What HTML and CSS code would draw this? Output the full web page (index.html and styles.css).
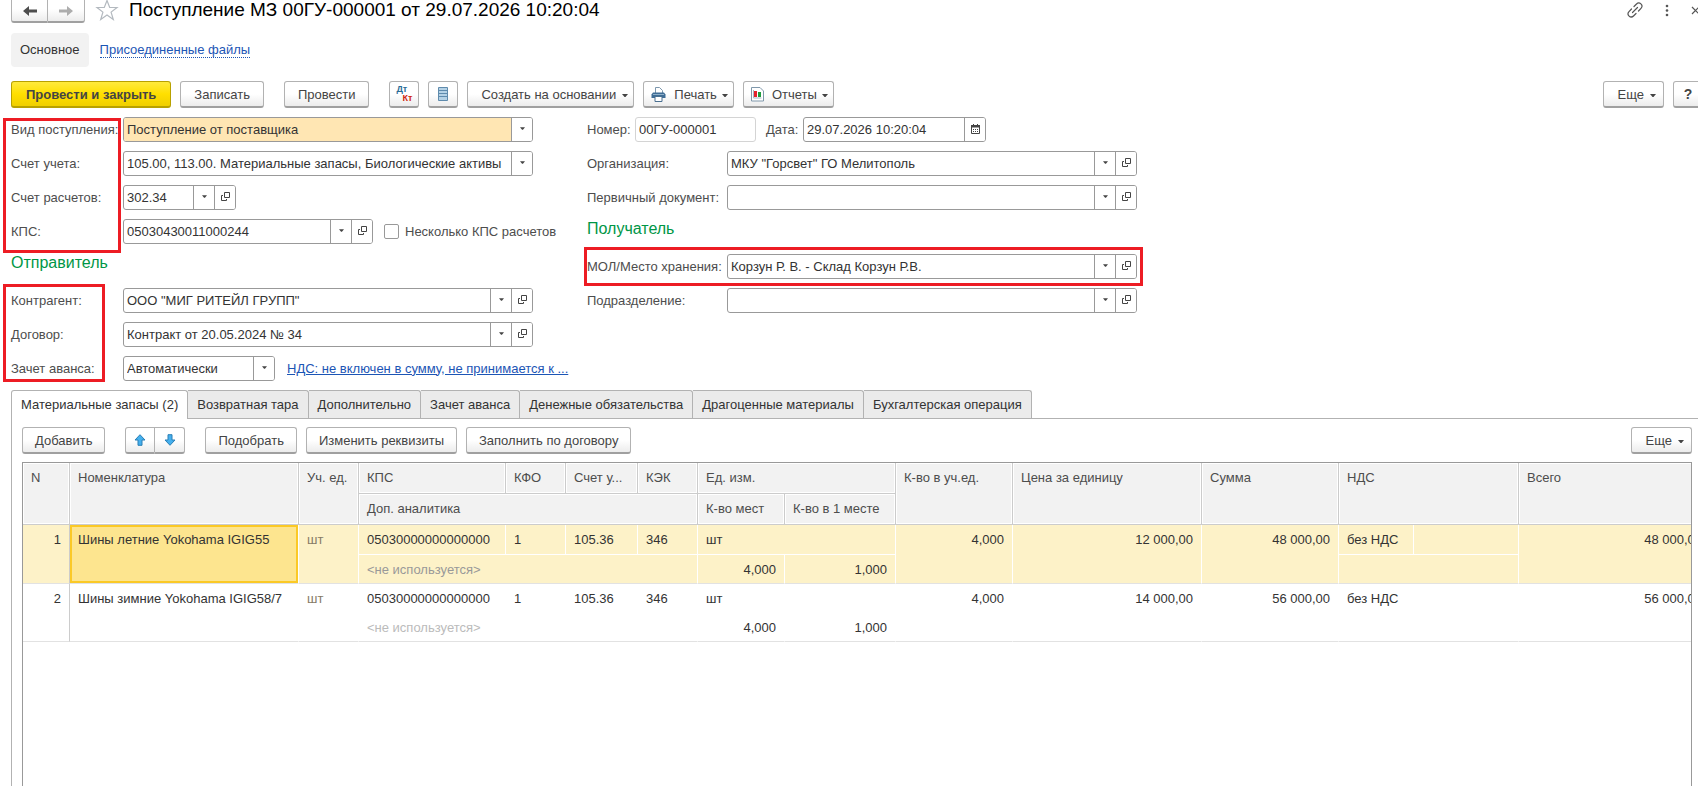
FILE: index.html
```html
<!DOCTYPE html>
<html lang="ru">

<head>
    <meta charset="UTF-8">
    <meta name="viewport" content="width=device-width, initial-scale=1.0">
    <title>Поступление МЗ</title>
    <link rel="stylesheet" href="styles.css">
</head>

<body>
    <!-- иконки -->
    <svg class="sprite" aria-hidden="true">
        <symbol id="i-caret" viewBox="0 0 6 3"><path d="M0 0h6L3.500 3h-1z" fill="#444"/></symbol>
        <symbol id="i-open" viewBox="0 0 9 9"><path d="M3.500.5h5v5h-5zM2 3.500H.5v5h5V7" fill="none" stroke="#444"/></symbol>
    </svg>

    <!-- заголовок -->
    <header class="header">
        <div class="btn-group nav">
            <button class="btn" aria-label="Назад"><svg width="14" height="10" viewBox="0 0 14 10"><path d="M0 5l6-5v3.500h8v3H6V10z" fill="#4d4d4d"/></svg></button>
            <button class="btn" aria-label="Вперед"><svg width="14" height="10" viewBox="0 0 14 10"><path d="M14 5L8 0v3.500H0v3h8V10z" fill="#adadad"/></svg></button>
        </div>
        <button class="icon-btn star" aria-label="В избранное"><svg width="24" height="22" viewBox="0 0 24 22"><path d="M12 1.500l2.700 7H22l-5.900 4.600 2.200 7.400-6.300-4.500-6.300 4.500 2.200-7.400L2 8.500h7.300z" fill="#fff" stroke="#b3b9bf" stroke-width="1.200"/></svg></button>
        <h1 class="title">Поступление МЗ 00ГУ-000001 от 29.07.2026 10:20:04</h1>
        <div class="window-tools">
            <button class="icon-btn" aria-label="Ссылка"><svg width="16" height="16" viewBox="0 0 16 16"><g fill="none" stroke="#555" stroke-width="1.200" stroke-linecap="round"><path d="M7 4.500l2.500-2.500a3 3 0 0 1 4.500 4.300L11.500 9"/><path d="M9 11.500L6.500 14A3 3 0 0 1 2 9.700L4.500 7"/><path d="M5.500 10.500l5-5"/></g></svg></button>
            <button class="icon-btn" aria-label="Меню"><svg width="4" height="14" viewBox="0 0 4 14"><g fill="#555"><circle cx="2" cy="3" r="1.300"/><circle cx="2" cy="7.500" r="1.300"/><circle cx="2" cy="12" r="1.300"/></g></svg></button>
            <button class="icon-btn" aria-label="Закрыть"><svg width="10" height="10" viewBox="0 0 10 10"><path d="M1 2l7 7M8 2L1 9" stroke="#555" stroke-width="1.200"/></svg></button>
        </div>
    </header>

    <nav class="sections">
        <a class="section active" href="#main">Основное</a>
        <a class="section" href="#files"><span>Присоединенные файлы</span></a>
    </nav>

    <!-- командная панель -->
    <div class="toolbar">
        <button class="btn primary">Провести и закрыть</button>
        <button class="btn">Записать</button>
        <button class="btn apart">Провести</button>
        <button class="btn square apart" aria-label="Дт Кт"><span class="dtkt"><span class="dt">Дт</span><span class="kt">Кт</span></span></button>
        <button class="btn square" aria-label="Реестр"><svg width="10" height="14" viewBox="0 0 10 14"><path d="M.5.5h9v13h-9z" fill="#b5d2e6" stroke="#5f8bad"/><path d="M0 3.500h10M0 6.500h10M0 9.500h10" stroke="#5f8bad"/></svg></button>
        <button class="btn">Создать на основании<svg class="caret"><use href="#i-caret"/></svg></button>
        <button class="btn with-icon"><svg width="15" height="15" viewBox="0 0 15 15"><path d="M4.500 6V.5h4l3 3V6" fill="#fff" stroke="#7d97ad"/><path d="M2 5.500h11l1.500 2V11H.5V7.500z" fill="#3f6d96"/><path d="M2 7.500h11" stroke="#8fb0ca"/><path d="M4 9.500h7v5H4z" fill="#fff" stroke="#4a6f90"/></svg>Печать<svg class="caret"><use href="#i-caret"/></svg></button>
        <button class="btn with-icon"><svg width="13" height="15" viewBox="0 0 13 15"><path d="M.5.5h8.500l3.500 3.500v10H.5z" fill="#fff" stroke="#8098ab"/><path d="M3 4h3v6H3z" fill="#e5212b"/><path d="M7 5h3v5H7z" fill="#1e9b3c"/><path d="M2.500 3v8h8" fill="none" stroke="#a8b8c5"/></svg>Отчеты<svg class="caret"><use href="#i-caret"/></svg></button>
        <button class="btn push">Еще<svg class="caret"><use href="#i-caret"/></svg></button>
        <button class="btn square help">?</button>
    </div>

    <!-- реквизиты документа -->
    <form class="form">
        <div class="column">
            <div class="group marked marked-top">
                <div class="row">
                    <label for="kind">Вид поступления:</label>
                    <div class="field wide filled"><select id="kind"><option>Поступление от поставщика</option></select><span class="pick"><svg class="caret"><use href="#i-caret"/></svg></span></div>
                </div>
                <div class="row">
                    <label for="account">Счет учета:</label>
                    <div class="field wide"><select id="account"><option>105.00, 113.00. Материальные запасы, Биологические активы</option></select><span class="pick"><svg class="caret"><use href="#i-caret"/></svg></span></div>
                </div>
                <div class="row">
                    <label for="settle">Счет расчетов:</label>
                    <div class="field code"><input id="settle" value="302.34"><button type="button" class="pick" aria-label="Выбрать"><svg class="caret"><use href="#i-caret"/></svg></button><button type="button" class="pick" aria-label="Открыть"><svg class="open"><use href="#i-open"/></svg></button></div>
                </div>
                <div class="row">
                    <label for="kps">КПС:</label>
                    <div class="field kps"><input id="kps" value="05030430011000244"><button type="button" class="pick" aria-label="Выбрать"><svg class="caret"><use href="#i-caret"/></svg></button><button type="button" class="pick" aria-label="Открыть"><svg class="open"><use href="#i-open"/></svg></button></div>
                    <input type="checkbox" class="check" id="many"><label class="check-label" for="many">Несколько КПС расчетов</label>
                </div>
            </div>
            <h2 class="caption">Отправитель</h2>
            <div class="group marked marked-sender">
                <div class="row">
                    <label for="partner">Контрагент:</label>
                    <div class="field wide"><input id="partner" value="ООО &quot;МИГ РИТЕЙЛ ГРУПП&quot;"><button type="button" class="pick" aria-label="Выбрать"><svg class="caret"><use href="#i-caret"/></svg></button><button type="button" class="pick" aria-label="Открыть"><svg class="open"><use href="#i-open"/></svg></button></div>
                </div>
                <div class="row">
                    <label for="contract">Договор:</label>
                    <div class="field wide"><input id="contract" value="Контракт от 20.05.2024 № 34"><button type="button" class="pick" aria-label="Выбрать"><svg class="caret"><use href="#i-caret"/></svg></button><button type="button" class="pick" aria-label="Открыть"><svg class="open"><use href="#i-open"/></svg></button></div>
                </div>
                <div class="row">
                    <label for="advance">Зачет аванса:</label>
                    <div class="field advance"><select id="advance"><option>Автоматически</option></select><span class="pick"><svg class="caret"><use href="#i-caret"/></svg></span></div>
                    <a class="vat" href="#vat">НДС: не включен в сумму, не принимается к ...</a>
                </div>
            </div>
        </div>

        <div class="column right">
            <div class="row">
                <label class="short" for="number">Номер:</label>
                <div class="field number"><input id="number" value="00ГУ-000001" readonly></div>
                <label class="short date-label" for="date">Дата:</label>
                <div class="field date"><input id="date" value="29.07.2026 10:20:04"><button type="button" class="pick" aria-label="Календарь"><svg width="9" height="10" viewBox="0 0 9 10"><path d="M.5 2h8v7.500h-8z" fill="#fff" stroke="#444"/><path d="M0 1h9v2.500H0zM2 0h1v2H2zM6 0h1v2H6z" fill="#444"/><path d="M2 5.500h5M2 7.500h5" stroke="#444" stroke-dasharray="1 1"/></svg></button></div>
            </div>
            <div class="row">
                <label for="org">Организация:</label>
                <div class="field wide"><input id="org" value="МКУ &quot;Горсвет&quot; ГО Мелитополь"><button type="button" class="pick" aria-label="Выбрать"><svg class="caret"><use href="#i-caret"/></svg></button><button type="button" class="pick" aria-label="Открыть"><svg class="open"><use href="#i-open"/></svg></button></div>
            </div>
            <div class="row">
                <label for="primary">Первичный документ:</label>
                <div class="field wide"><input id="primary"><button type="button" class="pick" aria-label="Выбрать"><svg class="caret"><use href="#i-caret"/></svg></button><button type="button" class="pick" aria-label="Открыть"><svg class="open"><use href="#i-open"/></svg></button></div>
            </div>
            <h2 class="caption">Получатель</h2>
            <div class="row marked marked-store">
                <label for="store">МОЛ/Место хранения:</label>
                <div class="field wide"><input id="store" value="Корзун Р. В. - Склад Корзун Р.В."><button type="button" class="pick" aria-label="Выбрать"><svg class="caret"><use href="#i-caret"/></svg></button><button type="button" class="pick" aria-label="Открыть"><svg class="open"><use href="#i-open"/></svg></button></div>
            </div>
            <div class="row">
                <label for="dept">Подразделение:</label>
                <div class="field wide"><input id="dept"><button type="button" class="pick" aria-label="Выбрать"><svg class="caret"><use href="#i-caret"/></svg></button><button type="button" class="pick" aria-label="Открыть"><svg class="open"><use href="#i-open"/></svg></button></div>
            </div>
        </div>
    </form>

    <!-- закладки -->
    <div class="tabs" role="tablist">
        <button class="tab active" role="tab" aria-selected="true">Материальные запасы (2)</button>
        <button class="tab" role="tab">Возвратная тара</button>
        <button class="tab" role="tab">Дополнительно</button>
        <button class="tab" role="tab">Зачет аванса</button>
        <button class="tab" role="tab">Денежные обязательства</button>
        <button class="tab" role="tab">Драгоценные материалы</button>
        <button class="tab" role="tab">Бухгалтерская операция</button>
    </div>

    <main class="panel">
        <div class="toolbar">
            <button class="btn">Добавить</button>
            <div class="btn-group apart">
                <button class="btn" aria-label="Вверх"><svg width="12" height="12" viewBox="0 0 12 12"><path d="M6 .7l5 5.300H8v5.300H4V6H1z" fill="#45b0ee" stroke="#2a7fb5"/></svg></button>
                <button class="btn" aria-label="Вниз"><svg width="12" height="12" viewBox="0 0 12 12"><path d="M6 11.300L1 6h3V.7h4V6h3z" fill="#45b0ee" stroke="#2a7fb5"/></svg></button>
            </div>
            <button class="btn apart">Подобрать</button>
            <button class="btn">Изменить реквизиты</button>
            <button class="btn">Заполнить по договору</button>
            <button class="btn push">Еще<svg class="caret"><use href="#i-caret"/></svg></button>
        </div>

        <div class="grid-box">
            <table class="grid">
                <colgroup>
                    <col class="c-n"><col class="c-item"><col class="c-60"><col class="c-kps"><col class="c-60"><col class="c-acc"><col class="c-60">
                    <col class="c-places"><col class="c-inplace"><col class="c-qty"><col class="c-price"><col class="c-sum"><col class="c-vat"><col class="c-vatsum"><col>
                </colgroup>
                <thead>
                    <tr>
                        <th rowspan="2">N</th>
                        <th rowspan="2">Номенклатура</th>
                        <th rowspan="2">Уч. ед.</th>
                        <th>КПС</th>
                        <th>КФО</th>
                        <th>Счет у...</th>
                        <th>КЭК</th>
                        <th colspan="2">Ед. изм.</th>
                        <th rowspan="2">К-во в уч.ед.</th>
                        <th rowspan="2">Цена за единицу</th>
                        <th rowspan="2">Сумма</th>
                        <th rowspan="2" colspan="2">НДС</th>
                        <th rowspan="2">Всего</th>
                    </tr>
                    <tr>
                        <th colspan="4">Доп. аналитика</th>
                        <th>К-во мест</th>
                        <th>К-во в 1 месте</th>
                    </tr>
                </thead>
                <tbody class="selected">
                    <tr>
                        <td class="num line" rowspan="2">1</td>
                        <td class="current" rowspan="2">Шины летние Yokohama IGIG55</td>
                        <td class="unit" rowspan="2">шт</td>
                        <td>05030000000000000</td>
                        <td>1</td>
                        <td>105.36</td>
                        <td>346</td>
                        <td colspan="2">шт</td>
                        <td class="num" rowspan="2">4,000</td>
                        <td class="num" rowspan="2">12 000,00</td>
                        <td class="num" rowspan="2">48 000,00</td>
                        <td>без НДС</td>
                        <td></td>
                        <td class="num" rowspan="2">48 000,00</td>
                    </tr>
                    <tr>
                        <td class="muted" colspan="4">&lt;не используется&gt;</td>
                        <td class="num">4,000</td>
                        <td class="num">1,000</td>
                        <td colspan="2"></td>
                    </tr>
                </tbody>
                <tbody>
                    <tr>
                        <td class="num line" rowspan="2">2</td>
                        <td rowspan="2">Шины зимние Yokohama IGIG58/7</td>
                        <td class="unit" rowspan="2">шт</td>
                        <td>05030000000000000</td>
                        <td>1</td>
                        <td>105.36</td>
                        <td>346</td>
                        <td colspan="2">шт</td>
                        <td class="num" rowspan="2">4,000</td>
                        <td class="num" rowspan="2">14 000,00</td>
                        <td class="num" rowspan="2">56 000,00</td>
                        <td>без НДС</td>
                        <td></td>
                        <td class="num" rowspan="2">56 000,00</td>
                    </tr>
                    <tr>
                        <td class="muted" colspan="4">&lt;не используется&gt;</td>
                        <td class="num">4,000</td>
                        <td class="num">1,000</td>
                        <td colspan="2"></td>
                    </tr>
                </tbody>
            </table>
        </div>
    </main>
</body>

</html>
```
FILE: styles.css
```css
*,
*::after {
    box-sizing: border-box;
}

body {
    margin: 0;
    height: 100vh;
    display: flex;
    flex-direction: column;
    overflow: hidden;
    background: #fff;
    color: #333;
    font: 13px/16px "Liberation Sans", Arial, sans-serif;
}

button,
input,
select {
    font: inherit;
    color: inherit;
    margin: 0;
}

svg {
    flex: none;
}

.sprite {
    display: none;
}

.caret {
    width: 6px;
    height: 3px;
}

.open {
    width: 9px;
    height: 9px;
}

/* кнопки */
.btn {
    height: 27px;
    padding: 1px 13px 0;
    display: flex;
    align-items: center;
    justify-content: center;
    white-space: nowrap;
    color: #444;
    background: linear-gradient(#fff 50%, #ececec);
    border: 1px solid #b2b2b2;
    border-bottom: 2px solid #a0a0a0;
    border-radius: 3px;
}

.btn .caret {
    margin: 1px -8px 0 6px;
}

.btn.primary {
    padding: 1px 14px 0;
    font-weight: bold;
    background: linear-gradient(#ffea3d, #ffdf00 50%, #f0cf00);
    border-color: #b8a100;
}

.btn.square {
    width: 30px;
    padding: 0;
}

.btn.with-icon {
    padding-left: 7px;
    gap: 8px;
}

.btn.with-icon .caret {
    margin-left: -3px;
}

.btn-group {
    display: flex;
}

.btn-group .btn {
    width: 30px;
    padding: 0;
}

.btn-group .btn:first-child {
    border-radius: 3px 0 0 3px;
}

.btn-group .btn:last-child {
    border-left: 0;
    border-radius: 0 3px 3px 0;
}

.icon-btn {
    display: flex;
    padding: 0;
    border: 0;
    background: none;
}

.toolbar {
    display: flex;
    gap: 9px;
}

.toolbar .apart {
    margin-left: 11px;
}

.toolbar .push {
    padding: 1px 15px 0 14px;
    margin-left: auto;
}

.toolbar .help {
    margin-right: -5px;
    font-size: 14px;
    font-weight: bold;
}

.dtkt {
    display: flex;
    flex-direction: column;
    width: 16px;
    font: bold 9px/9px "Liberation Sans", Arial, sans-serif;
}

.dt {
    align-self: flex-start;
    color: #2b6c96;
}

.kt {
    align-self: flex-end;
    color: #d0250f;
}

/* заголовок */
.header {
    display: flex;
    align-items: center;
    height: 27px;
    margin: -4px 0 0 11px;
}

.nav .btn {
    width: 37px;
    padding-top: 4px;
}

.star {
    margin: 0 10px 0 10px;
}

.title {
    margin: 0;
    font-size: 19px;
    font-weight: normal;
    line-height: 24px;
    color: #000;
}

.window-tools {
    display: flex;
    align-items: center;
    gap: 22px;
    margin-left: auto;
    margin-right: -3px;
}

.sections {
    display: flex;
    gap: 11px;
    margin: 10px 0 0 11px;
}

.section {
    padding: 9px 0;
    color: #1c55b5;
    text-decoration: none;
}

.section span {
    border-bottom: 1px dotted #1c55b5;
}

.section.active {
    padding: 9px;
    color: #333;
    background: #f2f2f2;
    border-radius: 4px;
}

body > .toolbar {
    margin: 14px 0 0 11px;
}

/* форма */
.form {
    display: flex;
    gap: 54px;
    margin: 9px 11px 0;
}

.column,
.group {
    display: flex;
    flex-direction: column;
    gap: 9px;
}

.column {
    flex: 0 0 522px;
    min-width: 0;
}

.column.right {
    flex-basis: 551px;
}

.row {
    display: flex;
    align-items: center;
    height: 25px;
    white-space: nowrap;
}

.row label {
    flex: none;
    width: 112px;
    color: #4d4d4d;
}

.right .row label {
    width: 140px;
}

.right .row .short {
    width: 48px;
}

.right .row .date-label {
    width: 37px;
    margin-left: 10px;
}

.field {
    display: flex;
    flex: none;
    height: 25px;
    background: #fff;
    border: 1px solid #999;
    border-radius: 3px;
    overflow: hidden;
}

.field input,
.field select {
    flex: 1;
    min-width: 0;
    padding: 0 3px;
    border: 0;
    background: none;
    appearance: none;
}

.field.filled select {
    background: #ffe6b3;
}

.pick {
    display: flex;
    align-items: center;
    justify-content: center;
    width: 21px;
    padding: 0 0 2px;
    border: 0;
    border-left: 1px solid #999;
    background: #fff;
}

.pick .caret {
    width: 5px;
}

.wide {
    width: 410px;
}

.code {
    width: 113px;
}

.kps {
    width: 250px;
}

.advance {
    width: 152px;
}

.number {
    width: 121px;
    border-color: #d4d4d4;
}

.date {
    width: 183px;
}

.check {
    flex: none;
    appearance: none;
    width: 15px;
    height: 15px;
    margin: 0 6px 0 11px;
    border: 1px solid #999;
    border-radius: 2px;
}

.row .check-label {
    width: auto;
}

.vat {
    margin-left: 12px;
    color: #1c55b5;
}

.caption {
    height: 26px;
    margin: 0;
    font-size: 16px;
    font-weight: normal;
    line-height: 20px;
    color: #009646;
}

/* красные рамки */
.marked {
    position: relative;
}

.marked::after {
    content: "";
    position: absolute;
    border: 3px solid #ed1c24;
    pointer-events: none;
}

.marked-top::after {
    top: 1px;
    bottom: -9px;
    left: -8px;
    width: 118px;
}

.marked-sender::after {
    top: -4px;
    bottom: -1px;
    left: -8px;
    width: 102px;
}

.marked-store::after {
    top: -7px;
    bottom: -7px;
    left: -3px;
    right: -5px;
}

/* закладки */
.tabs {
    display: flex;
    margin: 9px 0 0 11px;
    border-bottom: 1px solid #b2b2b2;
}

.tab {
    height: 28px;
    padding: 0 9px;
    white-space: nowrap;
    background: #ebebeb;
    border: 1px solid #b2b2b2;
    border-bottom: 0;
    border-left: 0;
    border-radius: 0 3px 0 0;
}

.tab.active {
    height: 29px;
    margin-bottom: -1px;
    background: #fff;
    border-left: 1px solid #b2b2b2;
    border-radius: 3px 3px 0 0;
}

.panel {
    flex: 1;
    display: flex;
    flex-direction: column;
    min-height: 0;
    margin-left: 11px;
    padding: 8px 6px 0 10px;
    border-left: 1px solid #b2b2b2;
}

.panel .btn {
    padding: 1px 12px 0;
}

.panel .btn-group .btn {
    padding: 0;
}

.panel .toolbar .push {
    padding: 1px 15px 0 14px;
}

/* таблица */
.grid-box {
    flex: 1;
    margin-top: 8px;
    border: 1px solid #999;
    border-bottom: 0;
    overflow: hidden;
}

.grid {
    width: 100%;
    min-width: 1688px;
    table-layout: fixed;
    border-collapse: separate;
    border-spacing: 0;
}

.grid th,
.grid td {
    height: 29px;
    padding: 7px 8px 5px;
    vertical-align: top;
    text-align: left;
    font-weight: normal;
    white-space: nowrap;
    overflow: hidden;
}

.grid th {
    height: 31px;
    color: #4d4d4d;
    background: #f2f2f2;
    border-right: 1px solid #ccc;
    border-bottom: 1px solid #ccc;
    box-shadow: inset 0 0 0 1px #fff;
}

.grid td {
    border-right: 1px solid transparent;
}

.grid .selected tr:first-child td {
    height: 30px;
}

.grid tr:last-child td,
.grid td[rowspan] {
    border-bottom: 1px solid #e2e2e2;
}

.selected td {
    background: #fdf2c8;
}

.grid .selected td {
    border-right-color: #fff;
    border-bottom: 1px solid #fff;
}

.grid .selected tr:last-child td,
.grid .selected td[rowspan] {
    border-bottom-color: #e2e2e2;
}

.grid .num {
    text-align: right;
}

.grid td.line,
.grid .selected td.line {
    border-right-color: #ccc;
}

.grid .selected .current {
    background: #fde58f;
    box-shadow: inset 0 0 0 2px #fbc926;
}

.unit {
    color: #857a66;
}

.muted {
    color: #bbb;
}

.selected .muted {
    color: #999;
}

.c-n {
    width: 47px;
}

.c-item {
    width: 229px;
}

.c-60 {
    width: 60px;
}

.c-kps {
    width: 147px;
}

.c-acc {
    width: 72px;
}

.c-places {
    width: 87px;
}

.c-inplace {
    width: 111px;
}

.c-qty {
    width: 117px;
}

.c-price {
    width: 189px;
}

.c-sum {
    width: 137px;
}

.c-vat {
    width: 75px;
}

.c-vatsum {
    width: 105px;
}
```
